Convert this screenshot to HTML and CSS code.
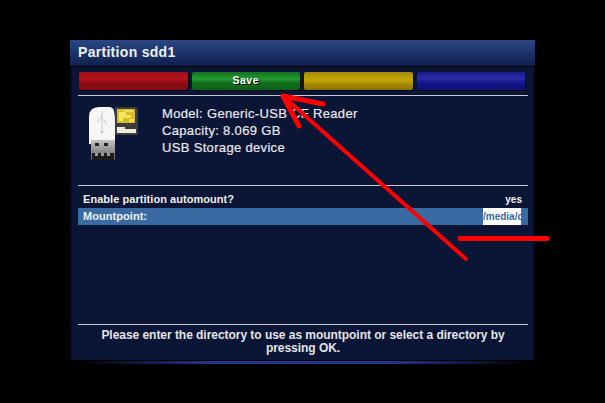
FILE: index.html
```html
<!DOCTYPE html>
<html lang="en">
<head>
    <meta charset="UTF-8">
    <title>Partition sdd1</title>
    <link rel="stylesheet" href="styles.css">
</head>
<body>
<div class="window">
    <div class="title-bar">Partition sdd1</div>

    <div class="content">
        <div class="buttons">
            <div class="color-button red"></div>
            <div class="color-button green">Save</div>
            <div class="color-button yellow"></div>
            <div class="color-button blue"></div>
        </div>
        <div class="divider"></div>

        <div class="device">
            <svg class="device-icon" width="52" height="58" viewBox="0 0 52 58">
                <defs>
                    <linearGradient id="plug" x1="0" y1="0" x2="0" y2="1">
                        <stop offset="0" stop-color="#c4c4c4"/>
                        <stop offset="0.6" stop-color="#8a8a8a"/>
                        <stop offset="1" stop-color="#5a5a5a"/>
                    </linearGradient>
                </defs>
                <!-- card -->
                <path d="M27 3h21l2 2v26H27z" fill="#3c3c3c"/>
                <rect x="29" y="5" width="18" height="14" fill="#d8bd28"/>
                <path d="M31 8h7v3h5v3h-8v3h-4z" fill="#f6e65e"/>
                <path d="M36 6h9v2h-9zM41 15h5v3h-5z" fill="#f0dc50"/>
                <rect x="29" y="25" width="19" height="4" fill="#f0ead8"/>
                <rect x="29" y="23" width="8" height="2" fill="#f0ead8"/>
                <!-- stick -->
                <path d="M1 13q0-10 10-10h10q4 0 5 4t1 11v22H1z" fill="#f6f6f6"/>
                <path d="M14 7v20M14 12l-4 4v3M14 15l4 3v3" stroke="#c8c8c8" fill="none"/>
                <circle cx="14" cy="28" r="1.500" fill="#c8c8c8"/>
                <rect x="3" y="36" width="24" height="20" fill="url(#plug)"/>
                <rect x="4" y="49" width="22" height="7" fill="#1c1c1c"/>
                <path d="M7 49h3v3H7zM13 49h3v3h-3zM19 49h3v3h-3z" fill="#9a9a9a"/>
                <rect x="7" y="39" width="4" height="3" fill="#222"/>
                <rect x="16" y="39" width="4" height="3" fill="#222"/>
            </svg>
            <div class="device-info">
                <div>Model: Generic-USB CF Reader</div>
                <div>Capacity: 8.069 GB</div>
                <div>USB Storage device</div>
            </div>
        </div>
        <div class="divider"></div>

        <div class="config-list">
            <div class="config-row">
                <span>Enable partition automount?</span>
                <span class="config-value">yes</span>
            </div>
            <div class="config-row selected">
                <span>Mountpoint:</span>
                <span class="config-input">/media/cf</span>
            </div>
        </div>

        <div class="divider"></div>
        <div class="help-text">Please enter the directory to use as mountpoint or select a directory by pressing OK.</div>
    </div>
    <div class="glow"></div>
</div>

<!-- red marks drawn on top of the screenshot -->
<svg class="marks" width="605" height="403" viewBox="0 0 605 403">
    <g stroke="#f00" stroke-linecap="round" fill="none">
        <path d="M283 96L466 259" stroke-width="4"/>
        <path d="M283 96L323 104M283 96L299 126" stroke-width="5"/>
        <path d="M460 238.500H547" stroke-width="5"/>
    </g>
</svg>
</body>
</html>
```

FILE: styles.css
```css
body {
    margin: 0;
    padding: 40px 70px 0;
    height: 403px;
    box-sizing: border-box;
    overflow: hidden;
    background-color: #000;
    font-family: "Liberation Sans", Arial, sans-serif;
    color: #f0f0f0;
}

.window {
    width: 465px;
    display: flex;
    flex-direction: column;
}

.title-bar {
    height: 26px;
    line-height: 25px;
    padding-left: 8px;
    font-size: 14px;
    font-weight: bold;
    letter-spacing: 0.3px;
    color: #eef0f4;
    background: linear-gradient(#2a4785, #0f1f4c);
    border-bottom: 1px solid #000;
}

.content {
    height: 293px;
    box-sizing: border-box;
    border: solid #060b22;
    border-width: 0 2px;
    padding: 5px 5px 0 6px;
    display: flex;
    flex-direction: column;
    background-color: #0b1536;
}

.buttons {
    display: flex;
    gap: 4px;
    padding: 0 3px 0 1px;
    height: 18px;
}

.color-button {
    flex: 1;
    border-radius: 2px;
    text-align: center;
    font-size: 10.5px;
    font-weight: bold;
    line-height: 17px;
    letter-spacing: 0.5px;
    color: #fff;
    text-shadow: 1px 1px 0 #000;
    box-shadow: 1px 1px 0 #050a1c;
}

.red {
    background: linear-gradient(#a01018, #b8141c 35%, #8f0d14 60%, #800b12);
}

.green {
    background: linear-gradient(#14701e, #249a30 40%, #12701d 60%, #0f5f18);
}

.yellow {
    background: linear-gradient(#a88c05, #c2a804 45%, #a88e04 65%, #8a7204);
}

.blue {
    background: linear-gradient(#141a8a, #2c2ca8 35%, #14188a 60%, #0e1070);
}

.divider {
    height: 1px;
    flex-shrink: 0;
    background-color: #c8c8cc;
}

.buttons + .divider {
    margin-top: 5px;
}

.device {
    height: 89px;
    display: flex;
    box-sizing: border-box;
    padding: 8px 0 0 10px;
}

.device-icon {
    margin-right: 22px;
}

.device-info {
    font-size: 13px;
    line-height: 17px;
    padding-top: 1px;
    letter-spacing: 0.33px;
    color: #e8e8ec;
    -webkit-text-stroke: 0.2px #e8e8ec;
}

.config-list {
    height: 138px;
    padding-top: 5px;
    box-sizing: border-box;
    font-size: 11px;
    font-weight: bold;
    letter-spacing: 0.05px;
}

.config-row {
    height: 17px;
    line-height: 17px;
    display: flex;
    justify-content: space-between;
    padding-left: 5px;
}

.config-value {
    font-size: 10px;
    letter-spacing: 0;
    padding-right: 6px;
}

.selected {
    background-color: #3a6aa2;
}

.config-input {
    width: 38px;
    margin-right: 7px;
    overflow: hidden;
    white-space: nowrap;
    font-size: 10px;
    letter-spacing: 0;
    color: #3a6aa2;
    background-color: #fff;
}

.help-text {
    padding: 4px 10px 0;
    font-size: 12px;
    line-height: 13px;
    font-weight: bold;
    letter-spacing: -0.04px;
    text-align: center;
    color: #e4e4e8;
}

.glow {
    height: 3px;
    margin: 1px 6px 0;
    background: linear-gradient(90deg, #000, #23358f 30%, #23358f 70%, #000);
}

.marks {
    position: absolute;
    left: 0;
    top: 0;
}
```
